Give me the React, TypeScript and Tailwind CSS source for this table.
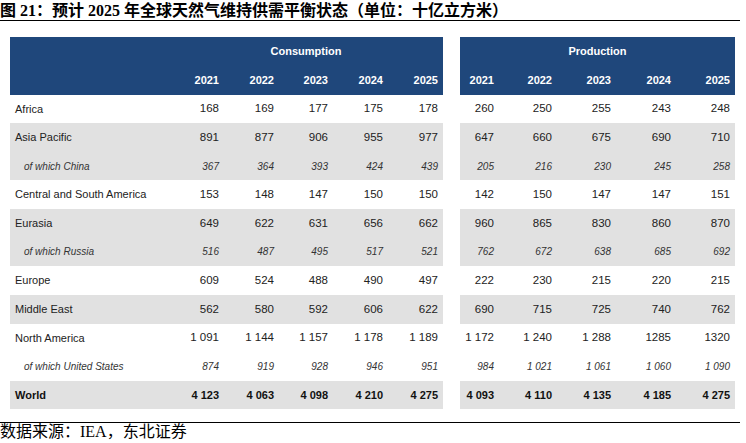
import React from 'react';

type Row = {
  label: string;
  c: (string | number)[];
  p: (string | number)[];
  gray?: boolean;
  sub?: boolean;
  bold?: boolean;
};

const rows: Row[] = [
  { label: 'Africa', c: [168, 169, 177, 175, 178], p: [260, 250, 255, 243, 248] },
  { label: 'Asia Pacific', gray: true, c: [891, 877, 906, 955, 977], p: [647, 660, 675, 690, 710] },
  { label: 'of which China', gray: true, sub: true, c: [367, 364, 393, 424, 439], p: [205, 216, 230, 245, 258] },
  { label: 'Central and South America', c: [153, 148, 147, 150, 150], p: [142, 150, 147, 147, 151] },
  { label: 'Eurasia', gray: true, c: [649, 622, 631, 656, 662], p: [960, 865, 830, 860, 870] },
  { label: 'of which Russia', gray: true, sub: true, c: [516, 487, 495, 517, 521], p: [762, 672, 638, 685, 692] },
  { label: 'Europe', c: [609, 524, 488, 490, 497], p: [222, 230, 215, 220, 215] },
  { label: 'Middle East', gray: true, c: [562, 580, 592, 606, 622], p: [690, 715, 725, 740, 762] },
  { label: 'North America', c: ['1 091', '1 144', '1 157', '1 178', '1 189'], p: ['1 172', '1 240', '1 288', '1285', '1320'] },
  { label: 'of which United States', sub: true, c: [874, 919, 928, 946, 951], p: [984, '1 021', '1 061', '1 060', '1 090'] },
  { label: 'World', gray: true, bold: true, c: ['4 123', '4 063', '4 098', '4 210', '4 275'], p: ['4 093', '4 110', '4 135', '4 185', '4 275'] },
];

const years = ['2021', '2022', '2023', '2024', '2025'];

const rowText = (r: Row) =>
  r.sub
    ? 'text-[10px] italic text-[#333]'
    : r.bold
    ? 'text-[11px] font-bold text-[#111]'
    : 'text-[11px] text-[#222]';

const numText = (r: Row) => (r.sub || r.bold ? '' : 'text-[11.5px]');

const App: React.FC = () => {
  return (
    <div className="w-[746px] h-[443px] bg-white overflow-hidden font-['Liberation_Sans',Arial,sans-serif]">
      {/* title */}
      <div className="w-[740px] h-[21px] leading-[21px] border-b-[1.5px] border-black text-[16px] font-bold text-black whitespace-nowrap font-['Liberation_Serif','Noto_Sans_CJK_SC',serif]">
        图 21：预计 2025 年全球天然气维持供需平衡状态（单位：十亿立方米）
      </div>

      <div className="flex mt-[15.5px] ml-[10px] gap-[17px]">
        {/* Consumption */}
        <div className="w-[433px] flex flex-col">
          <div className="bg-[#1f477b] text-white text-[11px] font-bold">
            <div className="grid grid-cols-[159px_274px] h-[29px] items-center">
              <div />
              <div className="text-center">Consumption</div>
            </div>
            <div className="grid grid-cols-[159px_55px_55px_54px_55px_55px] h-[29px] items-center">
              <div />
              {years.map((y) => (
                <div key={y} className="text-right pr-[5px]">{y}</div>
              ))}
            </div>
          </div>
          {rows.map((r) => (
            <div
              key={r.label}
              className={`grid grid-cols-[159px_55px_55px_54px_55px_55px] h-[28.64px] items-center ${r.gray ? 'bg-[#e1e1e1]' : 'bg-white'} ${rowText(r)}`}
            >
              <div className={r.sub ? 'pl-[14px]' : 'pl-[5px]'}>{r.label}</div>
              {r.c.map((v, i) => (
                <div key={i} className={`text-right pr-[5px] whitespace-nowrap ${numText(r)}`}>{v}</div>
              ))}
            </div>
          ))}
        </div>

        {/* Production */}
        <div className="w-[275px] flex flex-col">
          <div className="bg-[#1f477b] text-white text-[11px] font-bold">
            <div className="h-[29px] flex items-center justify-center">Production</div>
            <div className="grid grid-cols-[39px_58px_59px_60px_59px] h-[29px] items-center">
              {years.map((y) => (
                <div key={y} className="text-right pr-[5px]">{y}</div>
              ))}
            </div>
          </div>
          {rows.map((r) => (
            <div
              key={r.label}
              className={`grid grid-cols-[39px_58px_59px_60px_59px] h-[28.64px] items-center ${r.gray ? 'bg-[#e1e1e1]' : 'bg-white'} ${rowText(r)}`}
            >
              {r.p.map((v, i) => (
                <div key={i} className={`text-right pr-[5px] whitespace-nowrap ${numText(r)}`}>{v}</div>
              ))}
            </div>
          ))}
        </div>
      </div>

      {/* source */}
      <div className="w-[740px] mt-[13px] border-t-[1.5px] border-black">
        <div className="text-[16px] leading-[18px] text-black font-['Liberation_Serif','Noto_Sans_CJK_SC',serif]">
          数据来源：IEA，东北证券
        </div>
      </div>
    </div>
  );
};

export default App;
